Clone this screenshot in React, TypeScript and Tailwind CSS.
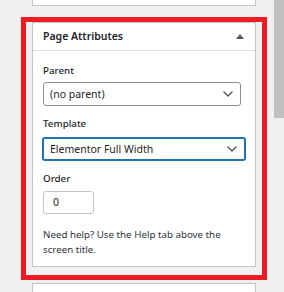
import React from "react";

function Chevron() {
  return (
    <svg width="10" height="6" viewBox="0 0 10 6" className="block">
      <path d="M1 1 L5 5 L9 1" fill="none" stroke="#50575e" strokeWidth="1.4" strokeLinecap="round" strokeLinejoin="round" />
    </svg>
  );
}

export default function App() {
  return (
    <div
      className="relative w-[284px] h-[292px] bg-[#f0f0f1] overflow-hidden text-[#1d2327]"
      style={{ fontFamily: '"Noto Sans", "Open Sans", Arial, sans-serif' }}
    >
      <div className="flex">
        <div className="w-[32px] shrink-0" />
        <div className="w-[224px] shrink-0 flex flex-col">
          <div className="h-[6px] bg-white border-x border-b border-[#c3c4c7]" />
          <div className="mt-[16px] h-[245px] bg-white border border-[#c3c4c7] flex flex-col">
            <div className="h-[28px] border-b border-[#dcdcde] flex items-center justify-between pl-[10px] pr-[11px]">
              <span className="text-[10.5px] font-semibold leading-none">Page Attributes</span>
              <svg width="8" height="5" viewBox="0 0 8 5" className="block">
                <path d="M0 5 L4 0 L8 5 Z" fill="#50575e" />
              </svg>
            </div>
            <div className="px-[10px] pt-[12px] flex flex-col text-[9.75px] leading-[15px]">
              <div className="font-medium">Parent</div>
              <div className="mt-[4px] w-[198px] h-[24px] rounded-[3px] border border-[#8c8f94] flex items-center justify-between pl-[6px] pr-[7px] text-[10.5px]">
                <span>(no parent)</span>
                <Chevron />
              </div>
              <div className="mt-[10px] font-medium">Template</div>
              <div className="mt-[6px] -ml-[1px] w-[204px] h-[24px] rounded-[3px] border-2 border-[#2271b1] flex items-center justify-between pl-[6px] pr-[7px] text-[10.5px]">
                <span>Elementor Full Width</span>
                <Chevron />
              </div>
              <div className="mt-[10px] font-medium">Order</div>
              <div className="mt-[5px] w-[51px] h-[23px] rounded-[3px] border border-[#c3c4c7] flex items-center pl-[9px] text-[10.5px]">
                0
              </div>
              <div className="mt-[13px] text-[#2c3338]">
                Need help? Use the Help tab above the screen title.
              </div>
            </div>
          </div>
          <div className="mt-[16px] h-[20px] bg-white border border-[#c3c4c7]" />
        </div>
        <div className="w-[18px] shrink-0" />
        <div className="w-[10px] h-[118px] bg-[#c1c1c1] shrink-0" />
      </div>
      <div className="absolute left-[21px] top-[17px] w-[246px] h-[263px] border-[5px] border-[#ed1c24]" />
    </div>
  );
}
